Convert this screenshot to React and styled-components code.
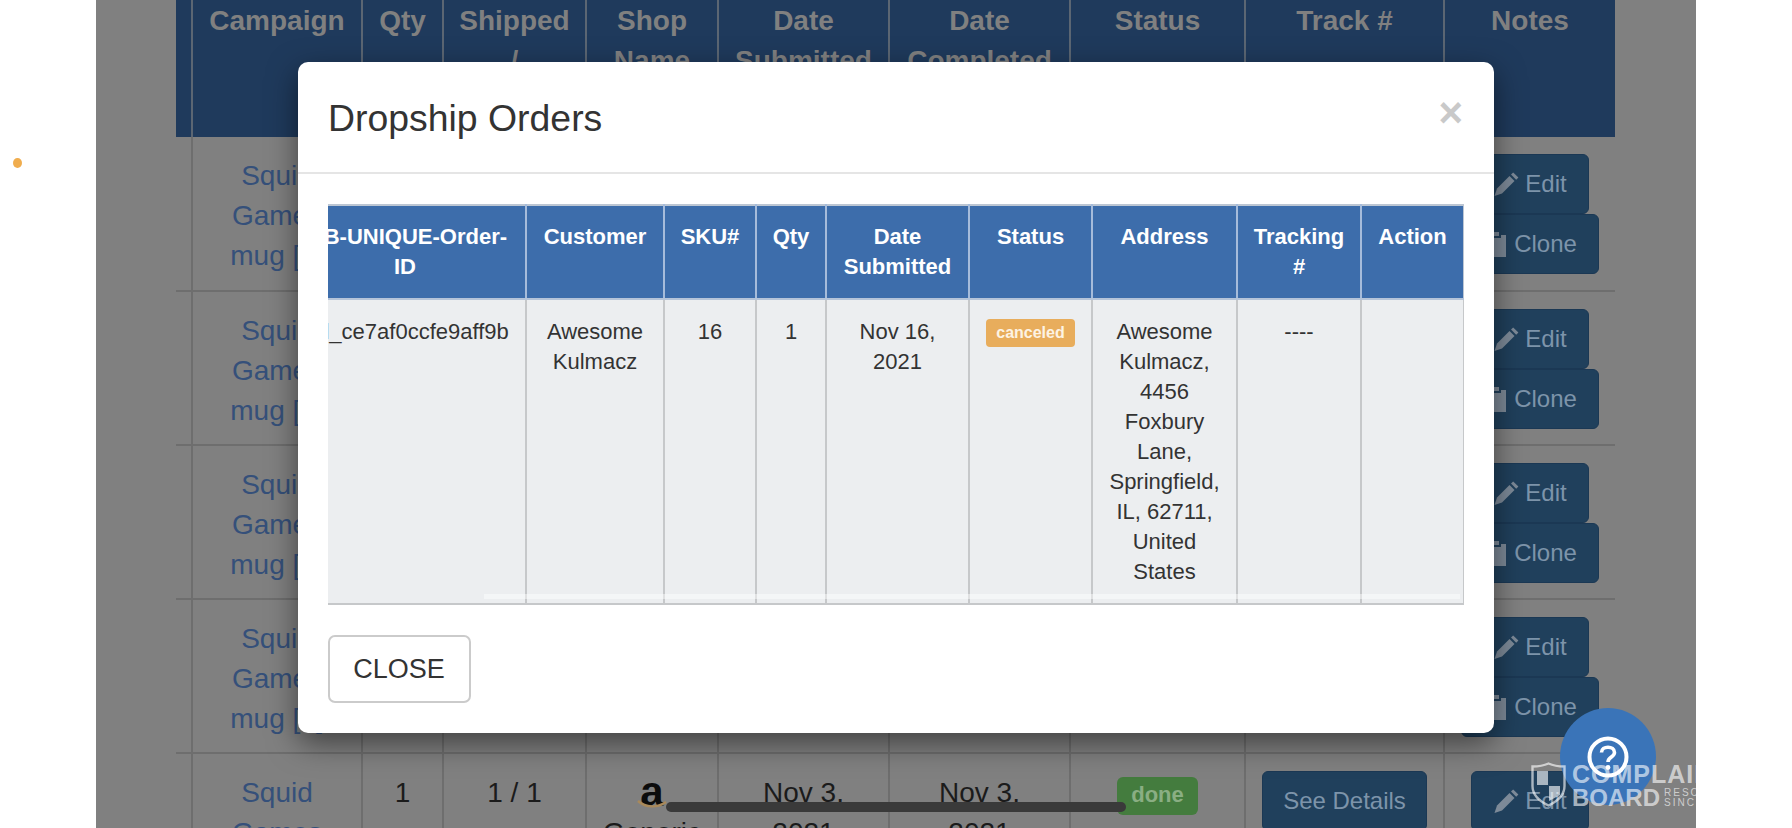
import React from "react";
import styled, { createGlobalStyle } from "styled-components";

const Global = createGlobalStyle`
  html, body { margin: 0; padding: 0; background: #fff; }
  body { font-family: "Liberation Sans", Arial, sans-serif; overflow: hidden; }
  * { box-sizing: border-box; }
`;

const Stage = styled.div`
  position: relative;
  width: 1792px;
  height: 828px;
  overflow: hidden;
  background: #fff;
  padding-left: 96px;
`;
const StatusDot = styled.span`
  position: absolute;
  left: 13px;
  top: 158px;
  width: 9px;
  height: 10px;
  border-radius: 50%;
  background: #f0ad4e;
`;
const PageColumn = styled.main`
  position: relative;
  width: 1600px;
  height: 828px;
  overflow: hidden;
  background: #808080;
  padding-left: 80px;
`;
const OrdersTable = styled.table`
  width: 1439px;
  table-layout: fixed;
  border-collapse: collapse;
  font-size: 28px;
  line-height: 40px;
  color: #1b1b1b;
`;
const OrdersHead = styled.th`
  height: 137px;
  padding: 1px 12px 0;
  vertical-align: top;
  text-align: center;
  font-weight: 700;
  color: #808080;
  background: #1f3a5c;
  border-left: 2px solid #5b6673;
  &:first-child { border-left: 0; }
`;
const OrdersCell = styled.td`
  height: 154px;
  padding: ${(p) => (p.$tight ? "17px 4px 0" : "19px 12px 0")};
  vertical-align: top;
  text-align: center;
  border-left: 2px solid #6e6e6e;
  border-bottom: 2px solid #6e6e6e;
  &:first-child { border-left: 0; }
`;
const CampaignLink = styled.a`
  color: #35507a;
`;
const DateText = styled.span`
  display: block;
  max-width: 110px;
  margin: 0 auto;
`;
const LogoGlyph = styled.span`
  position: relative;
  display: block;
  height: 40px;
  font-size: 42px;
  font-weight: 700;
  line-height: 38px;
  color: #0c0c0c;
`;
const Smile = styled.svg`
  position: absolute;
  left: 50%;
  top: 26px;
  margin-left: -15px;
`;
const StatusPill = styled.span`
  display: inline-block;
  margin-top: 3px;
  height: 38px;
  padding: 0 14px;
  border-radius: 6px;
  background: #447c3e;
  color: #8aae83;
  font-size: 22px;
  font-weight: 700;
  line-height: 36px;
`;
const ActionStack = styled.div`
  display: flex;
  flex-direction: column;
  align-items: center;
`;
const DarkButton = styled.button`
  display: inline-flex;
  align-items: center;
  gap: 6px;
  height: 60px;
  padding: ${(p) => (p.$compact ? "0 20px" : "0 21px 0 22px")};
  border: 1px solid #1b3854;
  border-radius: 6px;
  background: #20405c;
  color: #7d94aa;
  font: 24px "Liberation Sans", Arial, sans-serif;
  white-space: nowrap;
`;

const Backdrop = styled.div`
  position: absolute;
  inset: 0;
  display: flex;
  justify-content: center;
  align-items: flex-start;
  padding-top: 62px;
`;
const Modal = styled.section`
  width: 1196px;
  background: #fff;
  border-radius: 10px;
  box-shadow: 0 10px 30px rgba(0, 0, 0, 0.5);
  color: #333;
`;
const ModalHeader = styled.header`
  display: flex;
  justify-content: space-between;
  align-items: center;
  height: 112px;
  padding: 2px 30px 0;
  border-bottom: 2px solid #e5e5e5;
`;
const ModalTitle = styled.h4`
  margin: 0;
  font-size: 37.4px;
  font-weight: 400;
  line-height: 50px;
`;
const CloseX = styled.button`
  padding: 0;
  margin: -10px 1px 0 0;
  border: 0;
  background: none;
  color: #c9c9c9;
  font: 700 42px/42px "Liberation Sans", Arial, sans-serif;
`;
const ModalBody = styled.div`
  padding: 30px 30px 30px;
`;
const ScrollArea = styled.div`
  position: relative;
  overflow: hidden;
`;
const ScrollThumb = styled.span`
  position: absolute;
  left: 156px;
  right: 4px;
  bottom: 6px;
  height: 5px;
  background: rgba(255, 255, 255, 0.45);
`;
const DetailTable = styled.table`
  margin-left: -45px;
  width: 1180px;
  table-layout: fixed;
  border-collapse: collapse;
  font-size: 22px;
  line-height: 30px;
`;
const DetailHead = styled.th`
  height: 94px;
  padding: 16px 8px;
  vertical-align: top;
  text-align: center;
  font-weight: 700;
  color: #fff;
  background: #3d6dab;
  border: 2px solid #a6bcdb;
  border-top-color: #bcc6d3;
  border-bottom-color: #b5c4d9;
  &:last-child { border-right-color: #bcc6d3; }
`;
const DetailCell = styled.td`
  height: 305px;
  padding: 17px 8px 0;
  vertical-align: top;
  text-align: center;
  background: #eceef0;
  border: 2px solid #c6c8ca;
`;
const Badge = styled.span`
  display: inline-block;
  width: 89px;
  height: 28px;
  margin-top: 2px;
  border-radius: 4px;
  background: #e8ad5c;
  color: #fdf3e3;
  font-size: 16px;
  font-weight: 700;
  line-height: 27px;
  vertical-align: top;
`;
const ModalFooter = styled.footer`
  padding: 0 30px 30px;
`;
const CloseButton = styled.button`
  width: 143px;
  height: 68px;
  padding: 0 1px 0 0;
  border: 2px solid #cbcbcb;
  border-radius: 7px;
  background: #fff;
  color: #333;
  font: 27px "Liberation Sans", Arial, sans-serif;
`;

const HelpBubble = styled.button`
  position: absolute;
  left: 1464px;
  top: 708px;
  display: flex;
  align-items: center;
  justify-content: center;
  width: 96px;
  height: 97px;
  padding: 0;
  border: 0;
  border-radius: 50%;
  background: #3a74b8;
`;
const Watermark = styled.div`
  position: absolute;
  left: 1435px;
  top: 762px;
  display: flex;
  gap: 6px;
  white-space: nowrap;
  color: rgba(255, 255, 255, 0.62);
`;
const WatermarkText = styled.div`
  display: flex;
  flex-direction: column;
  padding-top: 1px;
`;
const WordOne = styled.span`
  font-size: 25px;
  font-weight: 700;
  line-height: 23px;
  letter-spacing: 1px;
`;
const WordTwo = styled.div`
  display: flex;
  align-items: center;
  gap: 4px;
`;
const WordBoard = styled.span`
  font-size: 24px;
  font-weight: 700;
  line-height: 24px;
`;
const WordSmall = styled.span`
  font-size: 10px;
  line-height: 10px;
  letter-spacing: 2px;
`;
const HomeBar = styled.span`
  position: absolute;
  left: 666px;
  top: 802px;
  width: 460px;
  height: 10px;
  border-radius: 5px;
  background: #3a3a3a;
`;

const Pencil = () => (
  <svg width="25" height="24" viewBox="0 0 25 24" fill="#7d8a98" aria-hidden="true">
    <path d="M0.5 24 L3 16.5 L15.5 4 L20.5 9 L8 21.5 Z" />
    <path d="M17 2.5 L19.2 0.4 L24.4 5.6 L22.2 7.7 Z" />
  </svg>
);
const Clipboard = () => (
  <svg width="24" height="26" viewBox="0 0 24 26" fill="#7d8a98" aria-hidden="true">
    <path d="M2 4 H7 V7 H17 V4 H22 V26 H2 Z" />
    <path d="M9 1 H15 V5 H9 Z" />
  </svg>
);
const Shield = () => (
  <svg width="35" height="45" viewBox="0 0 35 45" aria-hidden="true">
    <path d="M17.5 1.5 C23 4 28 4.5 33.5 4.5 V24 C33.5 33 26 39.5 17.5 43.5 C9 39.5 1.5 33 1.5 24 V4.5 C7 4.5 12 4 17.5 1.5 Z" fill="none" stroke="rgba(255,255,255,.62)" strokeWidth="2.4" />
    <path d="M6 9 H17 V23 H6 Z M18 24 H29 V33 L18 39 Z" fill="rgba(255,255,255,.62)" />
  </svg>
);

const orderHeads = ["", "Campaign", "Qty", "Shipped / Fulfilled", "Shop Name", "Date Submitted", "Date Completed", "Status", "Track #", "Notes"];
const orderWidths = [16, 170, 81, 143, 132, 171, 181, 175, 199, 171];
const detailWidths = [242, 138, 92, 70, 143, 123, 145, 124, 103];
const detailHeads = ["WB-UNIQUE-Order-ID", "Customer", "SKU#", "Qty", "Date Submitted", "Status", "Address", "Tracking #", "Action"];

const OrderRow = () => (
  <tr>
    <OrdersCell />
    <OrdersCell><CampaignLink>Squid Games mug [1]</CampaignLink></OrdersCell>
    <OrdersCell>1</OrdersCell>
    <OrdersCell>1 / 1</OrdersCell>
    <OrdersCell>
      <LogoGlyph>
        a
        <Smile width="30" height="10" viewBox="0 0 30 10" aria-hidden="true">
          <path d="M1 2 C9 9 21 9 29 3" fill="none" stroke="#a9895a" strokeWidth="2.4" />
        </Smile>
      </LogoGlyph>
      Generic
    </OrdersCell>
    <OrdersCell><DateText>Nov 3, 2021</DateText></OrdersCell>
    <OrdersCell><DateText>Nov 3, 2021</DateText></OrdersCell>
    <OrdersCell><StatusPill>done</StatusPill></OrdersCell>
    <OrdersCell $tight>
      <ActionStack><DarkButton $compact>See Details</DarkButton></ActionStack>
    </OrdersCell>
    <OrdersCell $tight>
      <ActionStack>
        <DarkButton><Pencil />Edit</DarkButton>
        <DarkButton><Clipboard />Clone</DarkButton>
      </ActionStack>
    </OrdersCell>
  </tr>
);

export default function App() {
  return (
    <Stage>
      <Global />
      <StatusDot />
      <PageColumn>
        <OrdersTable>
          <colgroup>{orderWidths.map((w, i) => <col key={i} width={w} />)}</colgroup>
          <thead>
            <tr>{orderHeads.map((h, i) => <OrdersHead key={i}>{h}</OrdersHead>)}</tr>
          </thead>
          <tbody>
            {[0, 1, 2, 3, 4].map((i) => <OrderRow key={i} />)}
          </tbody>
        </OrdersTable>
        <Backdrop>
          <Modal>
            <ModalHeader>
              <ModalTitle>Dropship Orders</ModalTitle>
              <CloseX>×</CloseX>
            </ModalHeader>
            <ModalBody>
              <ScrollArea>
                <DetailTable>
                  <colgroup>{detailWidths.map((w, i) => <col key={i} width={w} />)}</colgroup>
                  <thead>
                    <tr>{detailHeads.map((h) => <DetailHead key={h}>{h}</DetailHead>)}</tr>
                  </thead>
                  <tbody>
                    <tr>
                      <DetailCell>mil_ce7af0ccfe9aff9b</DetailCell>
                      <DetailCell>Awesome Kulmacz</DetailCell>
                      <DetailCell>16</DetailCell>
                      <DetailCell>1</DetailCell>
                      <DetailCell>Nov 16, 2021</DetailCell>
                      <DetailCell><Badge>canceled</Badge></DetailCell>
                      <DetailCell>Awesome Kulmacz, 4456 Foxbury Lane, Springfield, IL, 62711, United States</DetailCell>
                      <DetailCell>----</DetailCell>
                      <DetailCell />
                    </tr>
                  </tbody>
                </DetailTable>
                <ScrollThumb />
              </ScrollArea>
            </ModalBody>
            <ModalFooter>
              <CloseButton>CLOSE</CloseButton>
            </ModalFooter>
          </Modal>
        </Backdrop>
        <HelpBubble aria-label="Help">
          <svg width="44" height="44" viewBox="0 0 44 44" aria-hidden="true">
            <circle cx="22" cy="22" r="18.5" fill="none" stroke="#fff" strokeWidth="4" />
            <path d="M15.5 17.5 C15.5 10.5 28.5 10.5 28.5 17.5 C28.5 22 22 22 22 27" fill="none" stroke="#fff" strokeWidth="3.6" />
            <circle cx="22" cy="32.5" r="2.4" fill="#fff" />
          </svg>
        </HelpBubble>
        <Watermark>
          <Shield />
          <WatermarkText>
            <WordOne>COMPLAINTS</WordOne>
            <WordTwo>
              <WordBoard>BOARD</WordBoard>
              <WordSmall>RESOLVED<br />SINCE 2003</WordSmall>
            </WordTwo>
          </WatermarkText>
        </Watermark>
      </PageColumn>
      <HomeBar />
    </Stage>
  );
}
